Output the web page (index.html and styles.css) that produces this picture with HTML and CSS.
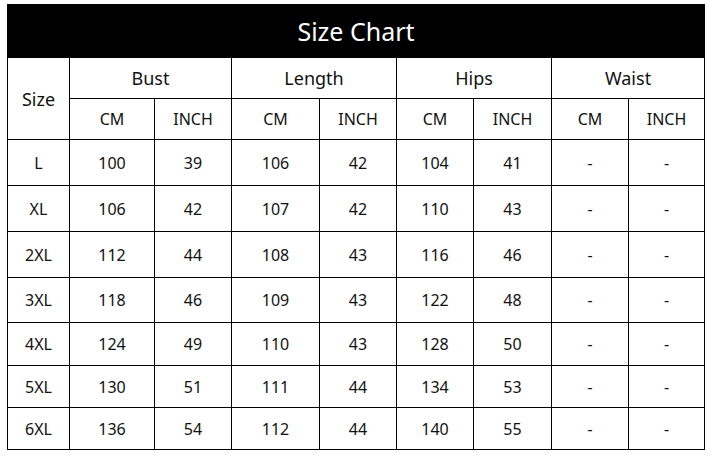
FILE: index.html
```html
<!DOCTYPE html>
<html>
<head>
<meta charset="utf-8">
<link rel="stylesheet" href="styles.css">
</head>
<body>
<table class="chart">
  <colgroup>
    <col class="c-size"><col class="c-w85"><col class="c-w77"><col class="c-w88"><col class="c-w77"><col class="c-w77"><col class="c-w78"><col class="c-w77"><col class="c-w76">
  </colgroup>
  <thead>
    <tr class="r-title"><th colspan="9" class="title">Size Chart</th></tr>
    <tr class="r-group">
      <th rowspan="2" class="group">Size</th>
      <th colspan="2" class="group">Bust</th>
      <th colspan="2" class="group">Length</th>
      <th colspan="2" class="group">Hips</th>
      <th colspan="2" class="group">Waist</th>
    </tr>
    <tr class="r-unit">
      <th class="unit">CM</th><th class="unit">INCH</th>
      <th class="unit">CM</th><th class="unit">INCH</th>
      <th class="unit">CM</th><th class="unit">INCH</th>
      <th class="unit">CM</th><th class="unit">INCH</th>
    </tr>
  </thead>
  <tbody>
    <tr class="r46"><td>L</td><td>100</td><td>39</td><td>106</td><td>42</td><td>104</td><td>41</td><td>-</td><td>-</td></tr>
    <tr class="r46"><td>XL</td><td>106</td><td>42</td><td>107</td><td>42</td><td>110</td><td>43</td><td>-</td><td>-</td></tr>
    <tr class="r46"><td>2XL</td><td>112</td><td>44</td><td>108</td><td>43</td><td>116</td><td>46</td><td>-</td><td>-</td></tr>
    <tr class="r45"><td>3XL</td><td>118</td><td>46</td><td>109</td><td>43</td><td>122</td><td>48</td><td>-</td><td>-</td></tr>
    <tr class="r43"><td>4XL</td><td>124</td><td>49</td><td>110</td><td>43</td><td>128</td><td>50</td><td>-</td><td>-</td></tr>
    <tr class="r42"><td>5XL</td><td>130</td><td>51</td><td>111</td><td>44</td><td>134</td><td>53</td><td>-</td><td>-</td></tr>
    <tr class="r42"><td>6XL</td><td>136</td><td>54</td><td>112</td><td>44</td><td>140</td><td>55</td><td>-</td><td>-</td></tr>
  </tbody>
</table>
</body>
</html>
```
FILE: styles.css
```css
html, body {
  margin: 0;
  background: #fff;
}
body {
  padding: 4px 0 0 7px;
  font-family: "Noto Sans", "Open Sans", sans-serif;
  color: #111;
}
.chart {
  border-collapse: collapse;
  table-layout: fixed;
  width: 698px;
}
.c-size { width: 62px; }
.c-w85 { width: 85px; }
.c-w77 { width: 77px; }
.c-w88 { width: 88px; }
.c-w78 { width: 78px; }
.c-w76 { width: 76px; }
.chart th, .chart td {
  border: 1px solid #000;
  text-align: center;
  vertical-align: middle;
  padding: 0;
  font-weight: 400;
}
.chart td {
  font-size: 16px;
}
.title {
  background: #000;
  color: #fff;
  font-size: 25px;
  height: 52px;
  padding-bottom: 2px;
}
.group {
  font-size: 18px;
}
.unit {
  font-size: 16px;
}
.r-group { height: 41px; }
.r-unit { height: 41px; }
.r46 { height: 46px; }
.r45 { height: 45px; }
.r43 { height: 43px; }
.r42 { height: 42px; }
```
